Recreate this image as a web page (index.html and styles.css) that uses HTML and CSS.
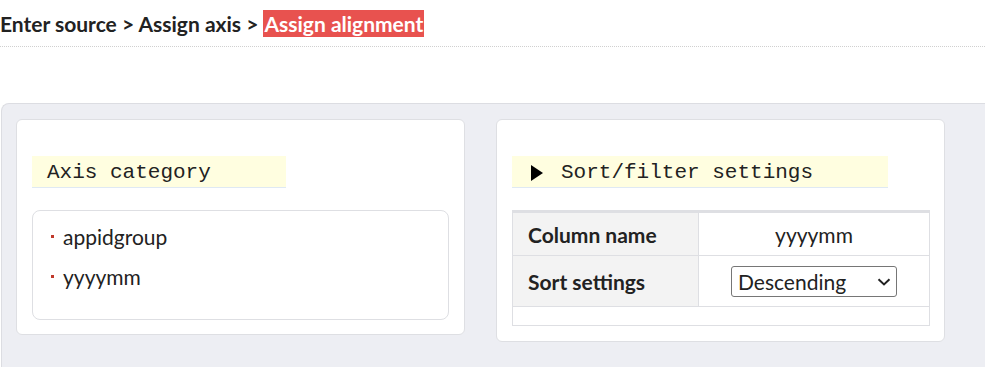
FILE: index.html
```html
<!DOCTYPE html>
<html lang="en">
<head>
  <meta charset="UTF-8">
  <meta name="viewport" content="width=device-width, initial-scale=1.0">
  <title>Assign alignment</title>
  <link rel="stylesheet" href="styles.css">
</head>
<body>
  <div class="breadcrumb">
    <span>Enter source &gt; Assign axis &gt; </span><span class="current">Assign alignment</span>
  </div>

  <div class="workspace">
    <div class="card card-left">
      <h2 class="card-title">Axis category</h2>
      <ul class="axis-list">
        <li>appidgroup</li>
        <li>yyyymm</li>
      </ul>
    </div>

    <div class="card">
      <h2 class="card-title"><span class="arrow"></span>Sort/filter settings</h2>
      <table class="settings">
        <tr>
          <th>Column name</th>
          <td>yyyymm</td>
        </tr>
        <tr>
          <th>Sort settings</th>
          <td>
            <div class="select-wrap">
              <select class="sort-select">
                <option>Descending</option>
                <option>Ascending</option>
              </select>
              <svg class="chevron" width="14" height="8" viewBox="0 0 14 8">
                <path d="M1.5 1.2 L7 6.4 L12.5 1.2" fill="none" stroke="#222" stroke-width="2"/>
              </svg>
            </div>
          </td>
        </tr>
        <tr class="empty-row">
          <td colspan="2"></td>
        </tr>
      </table>
    </div>
  </div>
</body>
</html>
```

FILE: styles.css
```css
body {
  margin: 0;
  font-family: Lato, "Liberation Sans", sans-serif;
  font-size: 21px;
  color: #222;
  background-color: #fff;
}

.breadcrumb {
  padding-top: 10px;
  box-sizing: border-box;
  height: 47px;
  border-bottom: 1px dotted #d0d0d0;
  font-weight: bold;
  line-height: 27px;
}

.breadcrumb .current {
  display: inline-block;
  background-color: #e8524f;
  color: #fff;
  padding: 0 1px;
}

.workspace {
  margin-top: 56px;
  margin-left: 1px;
  background-color: #edeef3;
  border: 1px solid #dcdde2;
  border-right: none;
  border-bottom: none;
  border-top-left-radius: 8px;
  padding: 15px 15px 15px 14px;
  display: grid;
  grid-template-columns: 449px 449px;
  gap: 31px;
  align-items: start;
  height: 264px;
  box-sizing: border-box;
}

.card {
  background-color: #fff;
  border: 1px solid #dedfe3;
  border-radius: 6px;
  padding: 36px 15px 15px;
}

.card-left {
  padding-bottom: 14px;
}

.card-title {
  display: inline-flex;
  align-items: center;
  box-sizing: border-box;
  margin: 0 0 22px;
  height: 32px;
  padding: 2px 75px 0 15px;
  background-color: #fffee0;
  border-bottom: 1px solid #dfe9f3;
  font-family: "Liberation Mono", monospace;
  font-size: 21px;
  font-weight: normal;
  color: #222;
}

.arrow {
  width: 0;
  height: 0;
  margin-left: 4px;
  margin-right: 18px;
  border-top: 8px solid transparent;
  border-bottom: 8px solid transparent;
  border-left: 12px solid #000;
}

.axis-list {
  list-style: none;
  margin: 0;
  padding: 5px 18px 23px;
  border: 1px solid #dedfe3;
  border-radius: 8px;
}

.axis-list li {
  display: flex;
  align-items: center;
  height: 40px;
}

.axis-list li::before {
  content: "";
  width: 3px;
  height: 3px;
  margin-right: 9px;
  background-color: #c0392b;
}

.settings {
  width: 418px;
  border-collapse: collapse;
  border-top: 3px solid #dedfe3;
}

.settings th,
.settings td {
  border: 1px solid #dedfe3;
  height: 42px;
  padding: 0 15px;
}

.settings th {
  width: 155px;
  background-color: #f3f3f3;
  text-align: left;
  font-weight: bold;
}

.settings td {
  text-align: center;
}

.settings tr:nth-child(2) th,
.settings tr:nth-child(2) td {
  height: 50px;
}

.settings .empty-row td {
  height: 18px;
}

.select-wrap {
  position: relative;
  display: inline-block;
  vertical-align: middle;
}

.sort-select {
  appearance: none;
  -webkit-appearance: none;
  display: block;
  width: 166px;
  height: 31px;
  font-family: Lato, "Liberation Sans", sans-serif;
  font-size: 21px;
  color: #222;
  border: 1px solid #767676;
  border-radius: 3px;
  background-color: #fff;
  padding: 0 0 0 6px;
  margin: 0;
}

.chevron {
  position: absolute;
  right: 6px;
  top: 12px;
  pointer-events: none;
}
```
